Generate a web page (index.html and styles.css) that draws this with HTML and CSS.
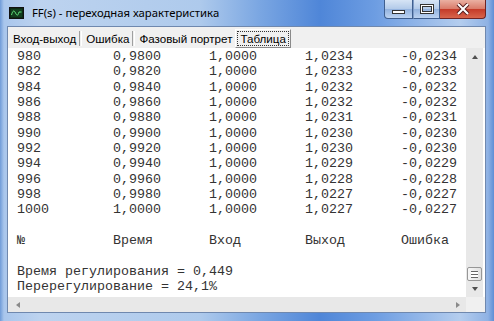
FILE: index.html
```html
<!DOCTYPE html>
<html lang="ru">

<head>
  <meta charset="UTF-8">
  <meta name="viewport" content="width=device-width, initial-scale=1.0">
  <title>FF(s) - переходная характеристика</title>
  <link rel="stylesheet" href="styles.css">
</head>

<body>
  <div class="window">
    <div class="titlebar">
      <svg class="app-icon" width="15" height="12" viewBox="0 0 15 12">
        <rect x="0.5" y="0.5" width="14" height="11" fill="#0c2a14" stroke="#111"/>
        <rect x="2" y="2" width="11" height="8" fill="#123d1e"/>
        <path d="M2.5 8 C4 3, 5 3, 6.5 6 S9 9, 10 5 L12.5 5" fill="none" stroke="#5fe07a" stroke-width="1"/>
      </svg>
      <span class="title">FF(s) - переходная характеристика</span>
      <div class="caption-buttons">
        <div class="cb cb-min">
          <svg width="14" height="6" viewBox="0 0 14 6"><rect x="0.5" y="1.5" width="12" height="3" fill="#fff" stroke="#333"/></svg>
        </div>
        <div class="cb cb-max">
          <svg width="14" height="10" viewBox="0 0 14 10"><rect x="1.5" y="1.5" width="11" height="7" fill="none" stroke="#333" stroke-width="3"/><rect x="1.5" y="1.5" width="11" height="7" fill="none" stroke="#fff" stroke-width="1"/></svg>
        </div>
        <div class="cb cb-close">
          <svg width="16" height="12" viewBox="0 0 16 12"><path d="M3 1 L13 11 M13 1 L3 11" stroke="#5a2020" stroke-width="4"/><path d="M3 1 L13 11 M13 1 L3 11" stroke="#fff" stroke-width="2"/></svg>
        </div>
      </div>
    </div>

    <div class="client">
      <div class="tabs">
        <span class="tab">Вход-выход</span>
        <span class="sep"></span>
        <span class="tab">Ошибка</span>
        <span class="sep"></span>
        <span class="tab">Фазовый портрет</span>
        <span class="tab active"><span class="focus">Таблица</span></span>
      </div>

      <div class="memo">
        <div class="memo-body">
<pre class="text">980         0,9800      1,0000      1,0234      -0,0234
982         0,9820      1,0000      1,0233      -0,0233
984         0,9840      1,0000      1,0232      -0,0232
986         0,9860      1,0000      1,0232      -0,0232
988         0,9880      1,0000      1,0231      -0,0231
990         0,9900      1,0000      1,0230      -0,0230
992         0,9920      1,0000      1,0230      -0,0230
994         0,9940      1,0000      1,0229      -0,0229
996         0,9960      1,0000      1,0228      -0,0228
998         0,9980      1,0000      1,0227      -0,0227
1000        1,0000      1,0000      1,0227      -0,0227

№           Время       Вход        Выход       Ошибка

Время регулирования = 0,449
Перерегулирование = 24,1%</pre>
          <div class="vscroll">
            <span class="arrow arrow-up"></span>
            <span class="track"></span>
            <span class="thumb"><span class="grip"></span></span>
            <span class="arrow arrow-down"></span>
          </div>
        </div>
        <div class="hscroll-row">
          <div class="hscroll">
            <span class="arrow arrow-left"></span>
            <span class="arrow arrow-right"></span>
          </div>
          <div class="corner"></div>
        </div>
      </div>
    </div>
  </div>
</body>

</html>
```

FILE: styles.css
```css
body {
  margin: 0;
  background: #fff;
}

.window {
  width: 494px;
  height: 321px;
  box-sizing: border-box;
  padding: 0 8px 0 7px;
  background: linear-gradient(to right, #6f9bd8 0px, #a9c6ec 4px, #bdd3ef 40px, #aecaec 200px, #7aa6e2 260px, #4f86d8 320px, #6d9de2 375px, #b4cdee 460px, #8fb2e4 488px, #5f8fd6 494px);
  font-family: "Liberation Sans", Arial, sans-serif;
}

.titlebar {
  height: 26px;
  display: flex;
  align-items: center;
}

.app-icon {
  margin: 0 8px 0 2px;
}

.title {
  font-family: "Noto Sans", "Liberation Sans", sans-serif;
  font-size: 11.3px;
  color: #000;
  padding-bottom: 1px;
}

.caption-buttons {
  display: flex;
  margin-left: auto;
  align-self: flex-start;
  height: 19px;
}

.cb {
  display: flex;
  align-items: center;
  justify-content: center;
  box-sizing: border-box;
  border: 1px solid #3f5f8f;
  border-top: none;
}

.cb-min {
  width: 29px;
  border-radius: 0 0 0 4px;
  align-items: flex-end;
  padding-bottom: 3px;
  background: linear-gradient(#d6e4f5, #b2cae9 50%, #92b2de 51%, #bcd3f1);
}

.cb-max {
  width: 27px;
  border-left: 1px solid #7f9cc6;
  background: linear-gradient(#d6e4f5, #b2cae9 50%, #92b2de 51%, #bcd3f1);
}

.cb-close {
  width: 46px;
  border-left: none;
  border-color: #6e2424;
  border-radius: 0 0 4px 0;
  background: linear-gradient(#eab0a2, #d97a68 50%, #c43a28 51%, #d8654c);
}

.client {
  height: 287px;
  box-sizing: border-box;
  display: flex;
  flex-direction: column;
  border: 1px solid #6f88ae;
  background: #f0f0f0;
}

.tabs {
  height: 21px;
  flex-shrink: 0;
  box-sizing: border-box;
  display: flex;
  align-items: center;
  padding: 1px 0 0 4px;
  font-size: 11.6px;
  color: #000;
}

.tab {
  padding: 0 1px;
  line-height: 15px;
}

.sep {
  width: 1px;
  height: 15px;
  margin: 0 3px 0 2px;
  border-left: 1px solid #a0a0a0;
  border-right: 1px solid #fff;
}

.tab.active {
  margin-left: 2px;
  padding: 1px;
  border: 1px solid #fff;
  border-right-color: #8a8a8a;
  border-bottom-color: #8a8a8a;
}

.focus {
  display: block;
  padding: 0 2px;
  border: 1px dotted #333;
  line-height: 13px;
}

.memo {
  height: 264px;
  flex-shrink: 0;
  display: flex;
  flex-direction: column;
  background: #fff;
}

.memo-body {
  height: 249px;
  flex-shrink: 0;
  display: flex;
  overflow: hidden;
}

.text {
  flex: 1;
  margin: 0;
  padding: 1px 0 0 9px;
  font-family: "Liberation Mono", "Courier New", monospace;
  font-size: 13.33px;
  line-height: 15.33px;
  color: #333;
  overflow: hidden;
}

.vscroll {
  width: 17px;
  margin-right: 2px;
  display: flex;
  flex-direction: column;
  align-items: center;
  background: #e8e8e8;
}

.vscroll .track {
  flex: 1;
}

.arrow {
  width: 0;
  height: 0;
  border: 3px solid transparent;
}

.arrow-up {
  margin-top: 7px;
  border-bottom: 4px solid #505050;
  border-top: none;
}

.arrow-down {
  margin: 6px 0 6px;
  border-top: 4px solid #505050;
  border-bottom: none;
}

.thumb {
  width: 15px;
  height: 14px;
  box-sizing: border-box;
  border: 1px solid #979797;
  border-radius: 2px;
  background: linear-gradient(to right, #f7f7f7, #e0e0e0);
  display: flex;
  align-items: center;
  justify-content: center;
}

.grip {
  width: 7px;
  height: 5px;
  border-top: 1px solid #666;
  border-bottom: 1px solid #666;
  background: linear-gradient(#fff 0 2px, #666 2px 3px, #fff 3px);
}

.hscroll-row {
  height: 15px;
  flex-shrink: 0;
  display: flex;
}

.hscroll {
  flex: 1;
  display: flex;
  align-items: center;
  justify-content: space-between;
  padding: 0 6px 0 8px;
  background: #e8e8e8;
}

.arrow-left {
  border-right: 4px solid #8a8a8a;
  border-left: none;
}

.arrow-right {
  border-left: 4px solid #8a8a8a;
  border-right: none;
}

.corner {
  width: 19px;
  background: #f0f0f0;
}
```
